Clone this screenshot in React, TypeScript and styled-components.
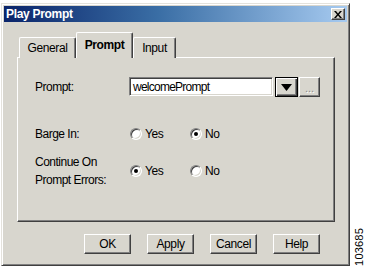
import React from "react";
import styled, { createGlobalStyle } from "styled-components";

const FACE = "#d8d6ce";

const Global = createGlobalStyle`
  html, body { margin: 0; padding: 0; background: #ffffff; }
  body { font-family: "Liberation Sans", Arial, sans-serif; }
  * { box-sizing: border-box; }
`;

const Page = styled.div`
  width: 365px;
  height: 267px;
  display: flex;
  padding: 3px 0 0 1px;
  background: #ffffff;
  overflow: hidden;
`;

const Window = styled.div`
  width: 349px;
  height: 263px;
  background: ${FACE};
  border: 1px solid;
  border-color: #e4e2dc #404040 #404040 #e4e2dc;
  box-shadow: inset 1px 1px #ffffff, inset -1px -1px #808080;
  padding: 2px;
  display: flex;
  flex-direction: column;
`;

const TitleBar = styled.div`
  height: 16px;
  background: linear-gradient(90deg, #0a246a 0%, #3a6ea5 45%, #a6caf0 100%);
  display: flex;
  align-items: center;
  justify-content: space-between;
  padding: 0 2px 0 2px;
`;

const Title = styled.span`
  color: #ffffff;
  font-weight: bold;
  font-size: 12px;
  letter-spacing: -0.3px;
`;

const CloseBtn = styled.div`
  width: 14px;
  height: 12px;
  background: ${FACE};
  border: 1px solid;
  border-color: #ffffff #404040 #404040 #ffffff;
  box-shadow: inset -1px -1px #808080;
  display: flex;
  align-items: center;
  justify-content: center;
`;

const Content = styled.div`
  flex: 1;
  display: flex;
  flex-direction: column;
  padding: 11px 12px 0 13px;
`;

const TabRow = styled.div`
  display: flex;
  align-items: flex-end;
  height: 25px;
  padding-left: 2px;
  position: relative;
  z-index: 1;
  margin-bottom: -1px;
`;

const Tab = styled.div<{ $active?: boolean; $w: number }>`
  width: ${(p) => p.$w}px;
  height: ${(p) => (p.$active ? 26 : 21)}px;
  background: ${FACE};
  border-top: 1px solid #ffffff;
  border-left: 1px solid #ffffff;
  border-right: 1px solid #404040;
  box-shadow: inset -1px 0 #808080;
  border-radius: 2px 2px 0 0;
  font-size: 12px;
  font-weight: ${(p) => (p.$active ? "bold" : "normal")};
  letter-spacing: -0.4px;
  color: #000;
  display: flex;
  align-items: ${(p) => (p.$active ? "flex-start" : "center")};
  padding-top: ${(p) => (p.$active ? 5 : 0)}px;
  justify-content: center;
`;

const Panel = styled.div`
  height: 165px;
  border: 1px solid;
  border-color: #ffffff #404040 #404040 #ffffff;
  box-shadow: inset -1px -1px #808080;
  padding: 19px 0 0 17px;
  display: flex;
  flex-direction: column;
`;

const Row = styled.div<{ $mt?: number }>`
  display: grid;
  grid-template-columns: 94px 1fr;
  align-items: center;
  margin-top: ${(p) => p.$mt ?? 0}px;
`;

const Label = styled.div`
  font-size: 12px;
  letter-spacing: -0.5px;
  line-height: 18px;
  color: #000;
`;

const Combo = styled.div`
  display: flex;
  align-items: center;
`;

const Input = styled.div`
  width: 144px;
  height: 19px;
  background: #ffffff;
  border: 1px solid;
  border-color: #808080 #ffffff #ffffff #808080;
  box-shadow: inset 1px 1px #404040, inset -1px -1px ${FACE};
  font-size: 12px;
  letter-spacing: -0.75px;
  padding: 2px 0 0 3px;
  color: #000;
  margin-top: -1px;
`;

const DropBtn = styled.div`
  width: 23px;
  height: 20px;
  margin-left: 2px;
  background: ${FACE};
  border: 1px solid #000;
  box-shadow: inset 1px 1px #ffffff, inset -1px -1px #404040, inset -2px -2px #808080;
  display: flex;
  align-items: center;
  justify-content: center;
`;

const MoreBtn = styled.div`
  width: 21px;
  height: 20px;
  margin-left: 1px;
  background: ${FACE};
  border: 1px solid;
  border-color: #ffffff #404040 #404040 #ffffff;
  box-shadow: inset -1px -1px #808080;
  display: flex;
  align-items: center;
  justify-content: center;
  font-size: 11px;
  color: #8a8a8a;
  text-shadow: 1px 1px #ffffff;
  padding-top: 1px;
`;

const RadioGroup = styled.div`
  display: flex;
  align-items: center;
  padding-left: 1px;
`;

const Option = styled.div`
  width: 60px;
  display: flex;
  align-items: center;
  gap: 3px;
  font-size: 12px;
  letter-spacing: -0.4px;
  color: #000;
`;

const Radio = styled.span<{ $on?: boolean }>`
  width: 12px;
  height: 12px;
  border-radius: 50%;
  background: #ffffff;
  border: 1px solid;
  border-color: #808080 #ffffff #ffffff #808080;
  box-shadow: inset 1px 1px #404040, inset -1px -1px ${FACE};
  display: flex;
  align-items: center;
  justify-content: center;
  &::after {
    content: "";
    width: 4px;
    height: 4px;
    border-radius: 50%;
    background: ${(p) => (p.$on ? "#000" : "transparent")};
  }
`;

const ButtonRow = styled.div`
  display: flex;
  justify-content: flex-end;
  gap: 16px;
  padding: 0 15px 0 0;
  margin-top: 12px;
`;

const Button = styled.div`
  width: 47px;
  height: 20px;
  background: ${FACE};
  border: 1px solid;
  border-color: #ffffff #404040 #404040 #ffffff;
  box-shadow: inset -1px -1px #808080;
  display: flex;
  align-items: center;
  justify-content: center;
  font-size: 12px;
  letter-spacing: -0.4px;
  color: #000;
`;

const Side = styled.div`
  flex: 1;
  display: flex;
  align-items: flex-end;
  justify-content: center;
  padding-bottom: 1px;
`;

const Figure = styled.span`
  writing-mode: vertical-rl;
  transform: rotate(180deg);
  font-size: 11px;
  letter-spacing: 0.2px;
  color: #000;
  margin-left: 2px;
`;

export default function App() {
  return (
    <>
      <Global />
      <Page>
        <Window>
          <TitleBar>
            <Title>Play Prompt</Title>
            <CloseBtn>
              <svg width="8" height="7" viewBox="0 0 8 7">
                <path d="M0 0h2l2 2.5L6 0h2L5 3.5 8 7H6L4 4.5 2 7H0l3-3.5z" fill="#000" />
              </svg>
            </CloseBtn>
          </TitleBar>
          <Content>
            <TabRow>
              <Tab $w={57}>General</Tab>
              <Tab $w={57} $active>Prompt</Tab>
              <Tab $w={43}>Input</Tab>
            </TabRow>
            <Panel>
              <Row>
                <Label>Prompt:</Label>
                <Combo>
                  <Input>welcomePrompt</Input>
                  <DropBtn>
                    <svg width="11" height="7" viewBox="0 0 11 7">
                      <path d="M0 0h11L5.5 7z" fill="#000" />
                    </svg>
                  </DropBtn>
                  <MoreBtn>...</MoreBtn>
                </Combo>
              </Row>
              <Row $mt={28}>
                <Label>Barge In:</Label>
                <RadioGroup>
                  <Option>
                    <Radio />
                    Yes
                  </Option>
                  <Option>
                    <Radio $on />
                    No
                  </Option>
                </RadioGroup>
              </Row>
              <Row $mt={10}>
                <Label>
                  Continue On
                  <br />
                  Prompt Errors:
                </Label>
                <RadioGroup>
                  <Option>
                    <Radio $on />
                    Yes
                  </Option>
                  <Option>
                    <Radio />
                    No
                  </Option>
                </RadioGroup>
              </Row>
            </Panel>
            <ButtonRow>
              <Button>OK</Button>
              <Button>Apply</Button>
              <Button>Cancel</Button>
              <Button>Help</Button>
            </ButtonRow>
          </Content>
        </Window>
        <Side>
          <Figure>103685</Figure>
        </Side>
      </Page>
    </>
  );
}
